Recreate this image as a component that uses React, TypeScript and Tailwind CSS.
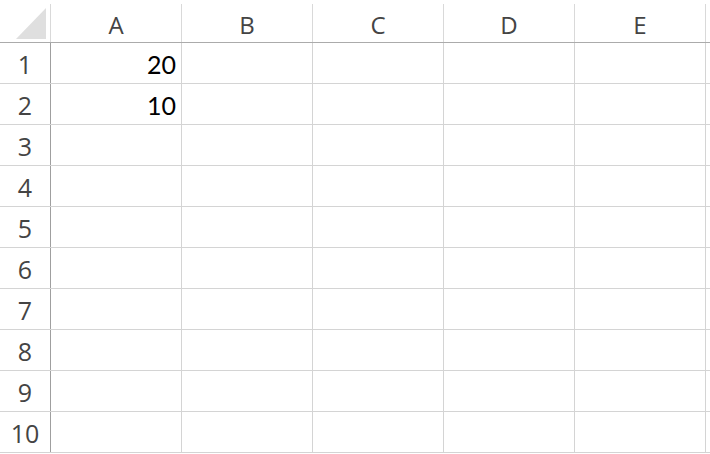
const COLS = ["A", "B", "C", "D", "E"];
const ROWS = [1, 2, 3, 4, 5, 6, 7, 8, 9, 10];
const DATA: Record<string, string> = { A1: "20", A2: "10" };

export default function App() {
  return (
    <div className="w-[710px] h-[454px] overflow-hidden bg-white">
      {/* column headers */}
      <div className="pt-1 border-b border-[#ababab]">
        <div className="flex h-[38px]">
          <div className="w-[51px] shrink-0 border-r border-[#d9d9d9]">
            <svg width="50" height="38" viewBox="0 0 50 38">
              <polygon points="16,35 46,35 46,4" fill="#dfdfdf" />
            </svg>
          </div>
          {COLS.map((c) => (
            <div
              key={c}
              className="w-[131px] shrink-0 border-r border-[#d9d9d9] flex items-center justify-center pt-[3px] text-[24px] text-[#444] font-['Open_Sans',sans-serif]"
            >
              {c}
            </div>
          ))}
          <div className="flex-1" />
        </div>
      </div>
      {/* rows */}
      {ROWS.map((r) => (
        <div key={r} className="flex h-[41px] border-b border-[#d4d4d4]">
          <div className="w-[51px] shrink-0 border-r border-[#9f9f9f] flex items-center justify-center pt-[4px] text-[25px] text-[#444] font-['Open_Sans',sans-serif]">
            {r}
          </div>
          {COLS.map((c) => (
            <div
              key={c}
              className="w-[131px] shrink-0 border-r border-[#d4d4d4] flex items-center justify-end pr-[5px] pt-[4px] text-[25px] text-black font-['Lato',sans-serif]"
            >
              {DATA[c + r] ?? ""}
            </div>
          ))}
          <div className="flex-1" />
        </div>
      ))}
    </div>
  );
}
